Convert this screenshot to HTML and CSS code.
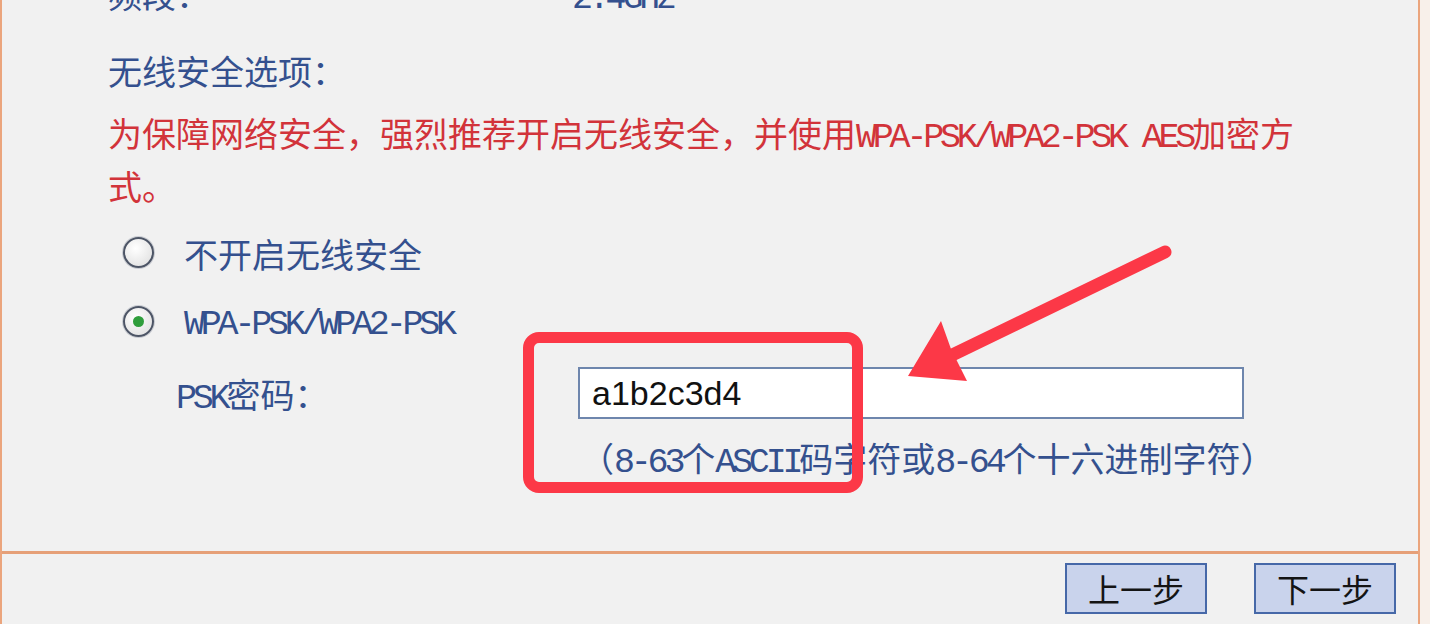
FILE: index.html
```html
<!DOCTYPE html>
<html lang="zh-CN">
  <head>
    <meta charset="UTF-8" />
    <title>无线安全设置</title>
    <link rel="stylesheet" href="styles.css">
  </head>
  <body>
    <div class="frame">
      <div class="panel">
        <div class="row-top">
          <span class="top-label">频段：</span>
          <span class="mono">2.4GHz</span>
        </div>
        <div class="heading">无线安全选项：</div>
        <p class="warn">为保障网络安全，强烈推荐开启无线安全，并使用<span class="mono">WPA-PSK/WPA2-PSK AES</span>加密方<br>式。</p>
        <div class="opt first">
          <span class="radio"></span>
          <span>不开启无线安全</span>
        </div>
        <div class="opt second">
          <span class="radio checked"></span>
          <span class="mono">WPA-PSK/WPA2-PSK</span>
        </div>
        <div class="psk-row">
          <span class="psk-label"><span class="mono">PSK</span>密码：</span>
          <div class="psk-input">a1b2c3d4</div>
        </div>
        <div class="hint">（<span class="mono">8-63</span>个<span class="mono">ASCII</span>码字符或<span class="mono">8-64</span>个十六进制字符）</div>
      </div>
      <div class="footer">
        <button class="btn">上一步</button>
        <button class="btn">下一步</button>
      </div>
    </div>

    <div class="mark-box"></div>
    <svg class="mark-arrow" width="1430" height="624" viewBox="0 0 1430 624">
      <line x1="1165" y1="252" x2="946" y2="358" stroke="#fc3847" stroke-width="13" stroke-linecap="round" />
      <polygon points="908,376 941,321 951,349 967,381" fill="#fc3847" />
    </svg>
  </body>
</html>
```

FILE: styles.css
```css
* { box-sizing: border-box; }
html, body { margin: 0; }
body { position: relative; width: 1430px; height: 624px; overflow: hidden; background: #f8f0ea; font-family: "Noto Sans CJK SC", sans-serif; font-size: 34px; }
.mono { font-family: "Liberation Mono", "Noto Sans CJK SC", monospace; font-size: 35px; letter-spacing: -4.2px; line-height: 1; }

.frame { width: 1420px; height: 624px; background: #f1f1f1; border-left: 2px solid #eba57d; border-right: 2px solid #eba57d; }
.panel { height: 554px; padding-left: 106px; border-bottom: 3px solid #e6a078; overflow: hidden; color: #34508e; }

.row-top { display: flex; align-items: baseline; height: 53px; line-height: 53px; margin-top: -33px; }
.top-label { width: 464px; }
.heading { height: 53px; line-height: 53px; margin-top: 24px; }
.warn { margin: 9px 0 0; line-height: 53px; color: #d2333a; white-space: nowrap; }

.opt { display: flex; align-items: center; height: 50px; line-height: 50px; }
.opt.first { margin-top: 17px; }
.opt.second { margin-top: 21px; }
.radio { position: relative; width: 31px; height: 31px; margin: -4px 30px 0 15px; border: 2px solid #4d5566; border-radius: 50%; background: radial-gradient(circle at 40% 35%, #ffffff, #dcdcdc); box-shadow: 0 0 0 1px #c9ccd2; }
.opt.second .radio { margin-top: -8px; }
.radio.checked::after { content: ""; position: absolute; left: 8px; top: 8px; width: 11px; height: 11px; border-radius: 50%; background: #2f9e3c; }

.psk-row { display: flex; align-items: center; margin-top: 17px; }
.psk-label { width: 470px; padding-left: 68px; }
.psk-input { width: 666px; height: 52px; padding-left: 12px; border: 2px solid #6e86ad; background: #fff; color: #111; font-family: "Liberation Sans", sans-serif; font-size: 34px; line-height: 48px; }
.hint { margin-top: 14px; padding-left: 472px; line-height: 50px; white-space: nowrap; }

.footer { display: flex; justify-content: flex-end; gap: 47px; padding: 9px 22px 0 0; }
.btn { width: 142px; height: 51px; padding: 0; border: 2px solid #4668a8; background: #c9d3ec; color: #141414; font-family: "Noto Sans CJK SC", sans-serif; font-size: 32px; line-height: 45px; }

.mark-box { position: absolute; left: 523px; top: 332px; width: 340px; height: 161px; border: 11px solid #fc3847; border-radius: 16px; }
.mark-arrow { position: absolute; left: 0; top: 0; }
```
